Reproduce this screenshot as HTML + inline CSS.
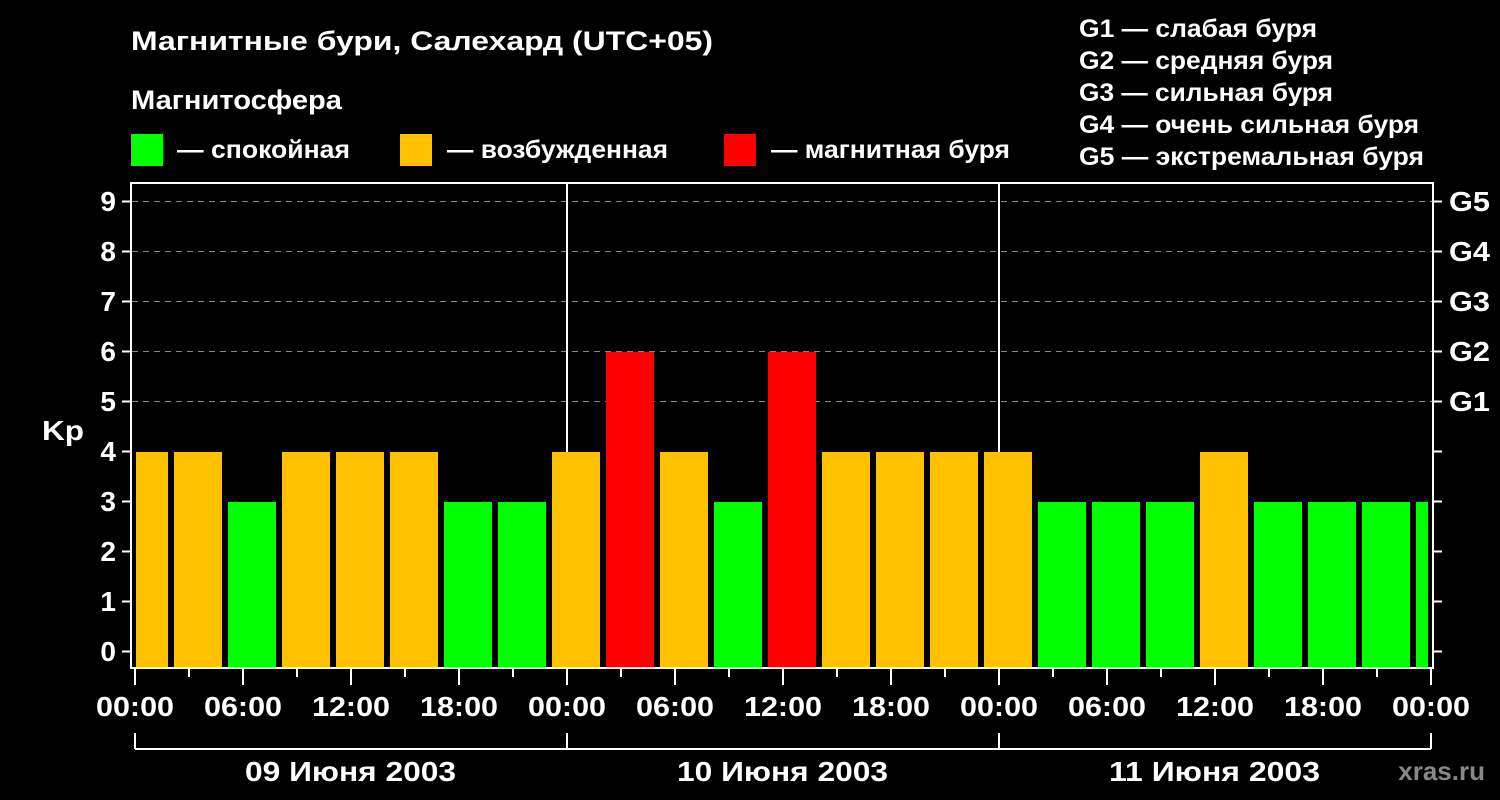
<!DOCTYPE html>
<html><head><meta charset="utf-8"><style>
body{margin:0;background:#000;}
svg{display:block;font-family:"Liberation Sans",sans-serif;font-weight:bold;}
</style></head><body>
<svg width="1500" height="800" viewBox="0 0 1500 800" xmlns="http://www.w3.org/2000/svg">
<rect width="1500" height="800" fill="#000"/>
<g fill="#fff" font-size="27" lengthAdjust="spacingAndGlyphs">
<text x="131" y="50" textLength="582" lengthAdjust="spacingAndGlyphs">Магнитные бури, Салехард (UTC+05)</text>
<text x="131" y="109" textLength="211" lengthAdjust="spacingAndGlyphs">Магнитосфера</text>
</g>
<rect x="131" y="134" width="32" height="32" fill="#00ff00"/>
<rect x="400" y="134" width="32" height="32" fill="#ffc000"/>
<rect x="724" y="134" width="32" height="32" fill="#ff0000"/>
<g fill="#fff" font-size="25">
<text x="177" y="158" textLength="173" lengthAdjust="spacingAndGlyphs">— спокойная</text>
<text x="447" y="158" textLength="221" lengthAdjust="spacingAndGlyphs">— возбужденная</text>
<text x="771" y="158" textLength="239" lengthAdjust="spacingAndGlyphs">— магнитная буря</text>
<text x="1079" y="37" textLength="238" lengthAdjust="spacingAndGlyphs">G1 — слабая буря</text>
<text x="1079" y="69" textLength="254" lengthAdjust="spacingAndGlyphs">G2 — средняя буря</text>
<text x="1079" y="101" textLength="254" lengthAdjust="spacingAndGlyphs">G3 — сильная буря</text>
<text x="1079" y="133" textLength="340" lengthAdjust="spacingAndGlyphs">G4 — очень сильная буря</text>
<text x="1079" y="165" textLength="345" lengthAdjust="spacingAndGlyphs">G5 — экстремальная буря</text>
</g>
<g stroke="#888" stroke-width="1" stroke-dasharray="6,5">
<line x1="132" y1="201.5" x2="1433" y2="201.5"/><line x1="132" y1="251.5" x2="1433" y2="251.5"/>
<line x1="132" y1="301.5" x2="1433" y2="301.5"/><line x1="132" y1="351.5" x2="1433" y2="351.5"/>
<line x1="132" y1="401.5" x2="1433" y2="401.5"/>
</g>
<g stroke="#fff" stroke-width="2"><line x1="567" y1="183" x2="567" y2="668"/><line x1="999" y1="183" x2="999" y2="668"/></g>
<g>
<rect x="136" y="452" width="32" height="216" fill="#ffc000"/>
<rect x="174" y="452" width="48" height="216" fill="#ffc000"/>
<rect x="228" y="502" width="48" height="166" fill="#00ff00"/>
<rect x="282" y="452" width="48" height="216" fill="#ffc000"/>
<rect x="336" y="452" width="48" height="216" fill="#ffc000"/>
<rect x="390" y="452" width="48" height="216" fill="#ffc000"/>
<rect x="444" y="502" width="48" height="166" fill="#00ff00"/>
<rect x="498" y="502" width="48" height="166" fill="#00ff00"/>
<rect x="552" y="452" width="48" height="216" fill="#ffc000"/>
<rect x="606" y="352" width="48" height="316" fill="#ff0000"/>
<rect x="660" y="452" width="48" height="216" fill="#ffc000"/>
<rect x="714" y="502" width="48" height="166" fill="#00ff00"/>
<rect x="768" y="352" width="48" height="316" fill="#ff0000"/>
<rect x="822" y="452" width="48" height="216" fill="#ffc000"/>
<rect x="876" y="452" width="48" height="216" fill="#ffc000"/>
<rect x="930" y="452" width="48" height="216" fill="#ffc000"/>
<rect x="984" y="452" width="48" height="216" fill="#ffc000"/>
<rect x="1038" y="502" width="48" height="166" fill="#00ff00"/>
<rect x="1092" y="502" width="48" height="166" fill="#00ff00"/>
<rect x="1146" y="502" width="48" height="166" fill="#00ff00"/>
<rect x="1200" y="452" width="48" height="216" fill="#ffc000"/>
<rect x="1254" y="502" width="48" height="166" fill="#00ff00"/>
<rect x="1308" y="502" width="48" height="166" fill="#00ff00"/>
<rect x="1362" y="502" width="48" height="166" fill="#00ff00"/>
<rect x="1416" y="502" width="12" height="166" fill="#00ff00"/>
</g>
<rect x="131" y="183" width="1302" height="485" fill="none" stroke="#fff" stroke-width="2"/>
<g stroke="#fff" stroke-width="2">
<line x1="122" y1="201.5" x2="131" y2="201.5"/><line x1="122" y1="251.5" x2="131" y2="251.5"/><line x1="122" y1="301.5" x2="131" y2="301.5"/><line x1="122" y1="351.5" x2="131" y2="351.5"/><line x1="122" y1="401.5" x2="131" y2="401.5"/><line x1="122" y1="451.5" x2="131" y2="451.5"/><line x1="122" y1="501.5" x2="131" y2="501.5"/><line x1="122" y1="551.5" x2="131" y2="551.5"/><line x1="122" y1="601.5" x2="131" y2="601.5"/><line x1="122" y1="651.5" x2="131" y2="651.5"/>
<line x1="1433" y1="201.5" x2="1442" y2="201.5"/><line x1="1433" y1="251.5" x2="1442" y2="251.5"/><line x1="1433" y1="301.5" x2="1442" y2="301.5"/><line x1="1433" y1="351.5" x2="1442" y2="351.5"/><line x1="1433" y1="401.5" x2="1442" y2="401.5"/><line x1="1433" y1="451.5" x2="1442" y2="451.5"/><line x1="1433" y1="501.5" x2="1442" y2="501.5"/><line x1="1433" y1="551.5" x2="1442" y2="551.5"/><line x1="1433" y1="601.5" x2="1442" y2="601.5"/><line x1="1433" y1="651.5" x2="1442" y2="651.5"/>
<line x1="135" y1="669" x2="135" y2="685"/><line x1="243" y1="669" x2="243" y2="685"/><line x1="351" y1="669" x2="351" y2="685"/><line x1="459" y1="669" x2="459" y2="685"/><line x1="567" y1="669" x2="567" y2="685"/><line x1="675" y1="669" x2="675" y2="685"/><line x1="783" y1="669" x2="783" y2="685"/><line x1="891" y1="669" x2="891" y2="685"/><line x1="999" y1="669" x2="999" y2="685"/><line x1="1107" y1="669" x2="1107" y2="685"/><line x1="1215" y1="669" x2="1215" y2="685"/><line x1="1323" y1="669" x2="1323" y2="685"/><line x1="1431" y1="669" x2="1431" y2="685"/>
<line x1="189" y1="669" x2="189" y2="677"/><line x1="297" y1="669" x2="297" y2="677"/><line x1="405" y1="669" x2="405" y2="677"/><line x1="513" y1="669" x2="513" y2="677"/><line x1="621" y1="669" x2="621" y2="677"/><line x1="729" y1="669" x2="729" y2="677"/><line x1="837" y1="669" x2="837" y2="677"/><line x1="945" y1="669" x2="945" y2="677"/><line x1="1053" y1="669" x2="1053" y2="677"/><line x1="1161" y1="669" x2="1161" y2="677"/><line x1="1269" y1="669" x2="1269" y2="677"/><line x1="1377" y1="669" x2="1377" y2="677"/>
<line x1="135" y1="749" x2="1431" y2="749"/>
<line x1="135" y1="733" x2="135" y2="749"/><line x1="567" y1="733" x2="567" y2="749"/><line x1="999" y1="733" x2="999" y2="749"/><line x1="1431" y1="733" x2="1431" y2="749"/>
</g>
<g fill="#fff" font-size="28" text-anchor="end">
<text x="116" y="211">9</text><text x="116" y="261">8</text><text x="116" y="311">7</text><text x="116" y="361">6</text><text x="116" y="411">5</text><text x="116" y="461">4</text><text x="116" y="511">3</text><text x="116" y="561">2</text><text x="116" y="611">1</text><text x="116" y="661">0</text>
</g>
<text x="42" y="440" fill="#fff" font-size="28" textLength="42" lengthAdjust="spacingAndGlyphs">Kp</text>
<g fill="#fff" font-size="28">
<text x="1449" y="211" textLength="41" lengthAdjust="spacingAndGlyphs">G5</text><text x="1449" y="261" textLength="41" lengthAdjust="spacingAndGlyphs">G4</text><text x="1449" y="311" textLength="41" lengthAdjust="spacingAndGlyphs">G3</text><text x="1449" y="361" textLength="41" lengthAdjust="spacingAndGlyphs">G2</text><text x="1449" y="411" textLength="41" lengthAdjust="spacingAndGlyphs">G1</text>
</g>
<g fill="#fff" font-size="28">
<text x="96" y="716" textLength="78" lengthAdjust="spacingAndGlyphs">00:00</text><text x="204" y="716" textLength="78" lengthAdjust="spacingAndGlyphs">06:00</text><text x="312" y="716" textLength="78" lengthAdjust="spacingAndGlyphs">12:00</text><text x="420" y="716" textLength="78" lengthAdjust="spacingAndGlyphs">18:00</text>
<text x="528" y="716" textLength="78" lengthAdjust="spacingAndGlyphs">00:00</text><text x="636" y="716" textLength="78" lengthAdjust="spacingAndGlyphs">06:00</text><text x="744" y="716" textLength="78" lengthAdjust="spacingAndGlyphs">12:00</text><text x="852" y="716" textLength="78" lengthAdjust="spacingAndGlyphs">18:00</text>
<text x="960" y="716" textLength="78" lengthAdjust="spacingAndGlyphs">00:00</text><text x="1068" y="716" textLength="78" lengthAdjust="spacingAndGlyphs">06:00</text><text x="1176" y="716" textLength="78" lengthAdjust="spacingAndGlyphs">12:00</text><text x="1284" y="716" textLength="78" lengthAdjust="spacingAndGlyphs">18:00</text>
<text x="1392" y="716" textLength="78" lengthAdjust="spacingAndGlyphs">00:00</text>
<text x="245" y="781" textLength="211" lengthAdjust="spacingAndGlyphs">09 Июня 2003</text><text x="677" y="781" textLength="211" lengthAdjust="spacingAndGlyphs">10 Июня 2003</text><text x="1109" y="781" textLength="211" lengthAdjust="spacingAndGlyphs">11 Июня 2003</text>
</g>
<text x="1485" y="780" fill="#888" font-size="26" text-anchor="end">xras.ru</text>
</svg>
</body></html>
